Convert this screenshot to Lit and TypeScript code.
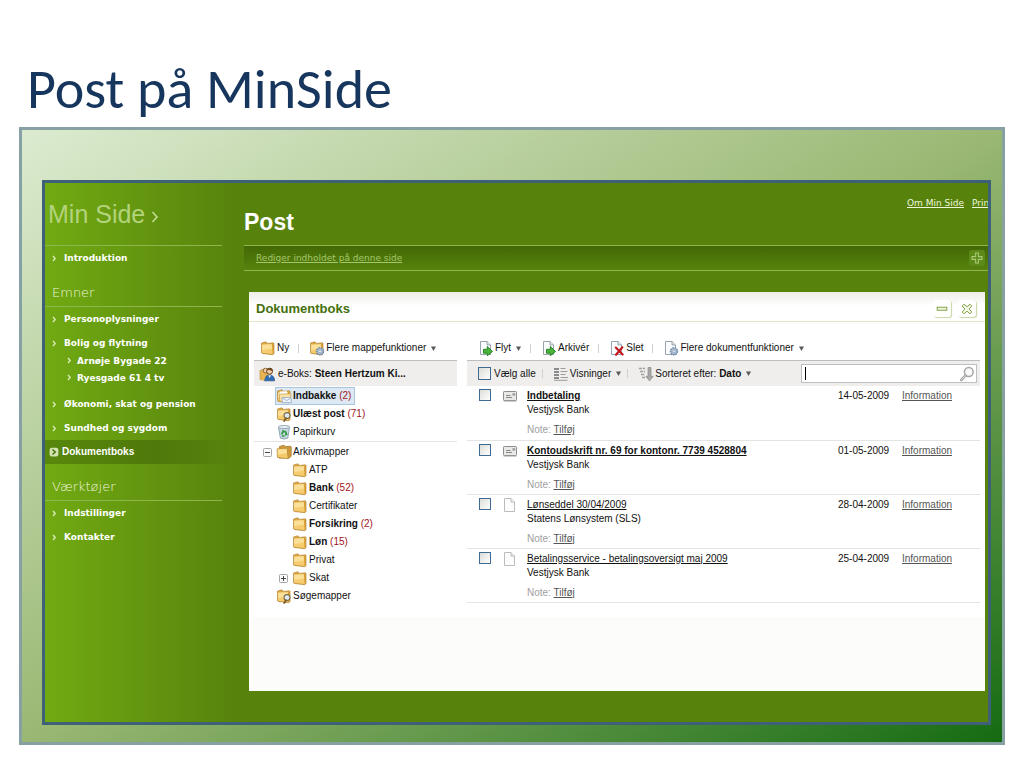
import { LitElement, html, svg, css, nothing } from "lit";
import { customElement, state } from "lit/decorators.js";

/* ---------- icons ---------- */

const wrap = (body: unknown, size = 16) =>
  html`<svg width=${size} height=${size} viewBox="0 0 16 16" aria-hidden="true">${body}</svg>`;

const folderShape = svg`
  <path d="M1.5 3 6 1.8 7.6 3.4l6-.6.4.6v10.2l-1.2 1.2L2 13.4l-.5-.6z" fill="#d9a441" stroke="#b58a3c" stroke-width=".7"/>
  <path d="M2 4.6 11.9 4.1 12.7 14.1 2 12.8z" fill="#f5cd70"/>
  <path d="M2.2 4.8 11.7 4.4 12 8.4 2.2 10z" fill="#fbe09a"/>
  <path d="M12.2 4.4 13.6 3.6v9.6l-.8.9z" fill="#d79c36"/>`;

const sheet = svg`
  <path d="M2.5 1.5h6.5l3.5 3.4v9.6h-10z" fill="#fafcfd" stroke="#8e9aa5" stroke-width=".9"/>
  <path d="M9 1.5v3.4h3.5" fill="#e3e9ee" stroke="#8e9aa5" stroke-width=".9"/>`;

const gear = svg`
  <circle cx="11" cy="11.3" r="3.5" fill="#a9bdd3" stroke="#6d84a0" stroke-width="1.5" stroke-dasharray="1.5 .9"/>
  <circle cx="11" cy="11.3" r="1.2" fill="#fff" stroke="#7e93ad" stroke-width=".6"/>`;

const greenArrow = svg`
  <path d="M5.5 9.3h3.8V6.4l5.2 5.1-5.2 4.2V13.2H5.5z" fill="#48b53a" stroke="#1f7c1a" stroke-width=".9" stroke-linejoin="round"/>`;

const icons: Record<string, unknown> = {
  folder: wrap(folderShape),
  folderGear: wrap(svg`${folderShape}${gear}`),
  archive: wrap(svg`
    <path d="M3.5 2.5 8 1.2l1.4 1.4 5.2-.3.6.6v9.4l-2 1.8H3z" fill="#cf9a3b" stroke="#a87a2e" stroke-width=".8"/>
    <path d="M1 4.8 11 4.2 12.2 14.8 1.4 13.4z" fill="#f4c968" stroke="#b58a3c" stroke-width=".7"/>
    <path d="M1.8 5.4 10.5 4.9 11 9.2 2 10.4z" fill="#fbe09a"/>`),
  inbox: wrap(svg`${folderShape}
    <path d="M3.6 3.6 11 3.2v4H3.8z" fill="#fff"/>
    <path d="M3.4 6.2 15 5.8 14 13.6 3.6 13.2z" fill="#fae3a4" stroke="#c69a4c" stroke-width=".7"/>
    <path d="M6 9.5h7.5l1.8.6v4.6H6.4z" fill="#eef4fb" stroke="#93a8c4" stroke-width=".8"/>
    <path d="M6.8 10.2 10.6 12.6l4-2.2" fill="none" stroke="#93a8c4" stroke-width=".8"/>`),
  searchFolder: wrap(svg`${folderShape}
    <circle cx="11" cy="9.6" r="3" fill="#dceaf5" stroke="#7c6a43" stroke-width="1.1"/>
    <path d="M10 12.2 8.2 15" stroke="#7c5a28" stroke-width="1.8" stroke-linecap="round"/>`),
  bin: wrap(svg`
    <path d="M2.5 3.2 13.5 3.2 11.8 14.2Q8 15.8 4.4 14.2z" fill="#c5d6e1" stroke="#7f97a6" stroke-width=".8"/>
    <ellipse cx="8" cy="3" rx="5.6" ry="1.5" fill="#eef4f7" stroke="#7f97a6" stroke-width=".8"/>
    <path d="M5.6 10.4 7.2 7l1.4 1M9.2 7.2l1.4 3-1.6.6M8.6 12H6" fill="none" stroke="#2f9a40" stroke-width="1.6"/>`),
  users: wrap(svg`
    <path d="M1 13.5V4.5L5 3l1.5 1.5 5-.5v8z" fill="#e9b552" stroke="#b58a3c" stroke-width=".6"/>
    <circle cx="6.6" cy="4.6" r="2.4" fill="#f0c9a0" stroke="#7a5426" stroke-width=".8"/>
    <circle cx="10.6" cy="5.2" r="3" fill="#f3cda6" stroke="#5b3a16" stroke-width=".9"/>
    <path d="M7.8 4.6Q8 1.8 11 2.1q2.8.4 2.6 3Q11 4.6 10 3.8 9 4.6 7.8 4.6z" fill="#6b441c"/>
    <path d="M5.4 14.8q.2-5.6 5.2-5.8 4.8.2 5 5.8z" fill="#2f6db5" stroke="#1d4a85" stroke-width=".7"/>
    <path d="M9.4 9.2 10.6 12l1.3-2.8z" fill="#fff"/>
    <path d="M2.2 14.5q.2-4 3.6-5.2l.8 1.2-1.6 4z" fill="#e9b552"/>`),
  move: wrap(svg`${sheet}${greenArrow}`),
  remove: wrap(svg`${sheet}<path d="M6.8 7.5l6.8 7.1M13.4 7.3 7 14.8" stroke="#c4161c" stroke-width="2.1" stroke-linecap="round"/>`),
  docGear: wrap(svg`${sheet}${gear}`),
  sheet: wrap(svg`
    <path d="M2.5 1.5h6.5l3.5 3.6v9.4h-10z" fill="#fdfdfd" stroke="#b4b4b4" stroke-width=".9"/>
    <path d="M9 1.5v3.6h3.5" fill="#eee" stroke="#b4b4b4" stroke-width=".9"/>`),
  mail: wrap(svg`
    <rect x="1.5" y="3.5" width="13" height="9" rx=".8" fill="#e9e9e7" stroke="#8d8d8d"/>
    <path d="M4 7.5h4.5M4 9.5h6" stroke="#8a8a8a"/>
    <rect x="10.5" y="5.2" width="2.6" height="2.4" fill="#9b9b9b"/>
    <path d="M1.6 13.2h13" stroke="#a9a9a9" stroke-width=".8"/>`),
  views: wrap(svg`
    <path d="M1 3h5M1 6h5M1 9h5M1 12h5" stroke="#8b8b8b" stroke-width="2"/>
    <path d="M7.5 2.5h5M7.5 5.5h7M7.5 8.5h5M7.5 11.5h7.5M1 14.3h13.5" stroke="#9c9c9c"/>`),
  sort: wrap(svg`
    <path d="M1 2.5h6M2 5.5h5M3 8.5h4M4 11.5h3" stroke="#a0a0a0" stroke-width="1.6" stroke-dasharray="3.2 .8"/>
    <path d="M10 1.5h3v8.8h2.2L11.5 15 7.8 10.3H10z" fill="#a8a8a8" stroke="#8b8b8b" stroke-width=".7"/>`),
  lens: wrap(svg`
    <circle cx="9.8" cy="6" r="4.4" fill="#fafafa" stroke="#a6a6a6" stroke-width="1.5"/>
    <path d="M6.6 9.4 2.2 14" stroke="#a6a6a6" stroke-width="2.6" stroke-linecap="round"/>
    <path d="M6.4 9.6 2.4 13.8" stroke="#e8e8e8" stroke-width=".8" stroke-linecap="round"/>`),
  badge: wrap(svg`
    <rect x="1" y="1" width="14" height="14" rx="3.5" fill="#d3e3b4"/>
    <path d="M5.5 4l4.5 4-4.5 4" fill="none" stroke="#4d770a" stroke-width="2.6"/>`, 10),
  plus: wrap(svg`
    <rect x="0" y="0" width="16" height="16" rx="3" fill="#5c8a18"/>
    <path d="M6.6 3h2.8v3.6H13v2.8H9.4V13H6.6V9.4H3V6.6h3.6z" fill="none" stroke="#a9c874" stroke-width="1.1"/>`),
  minus: wrap(svg`<rect x="2.5" y="6" width="11" height="3.4" fill="#f2f7e2" stroke="#7f9f45" stroke-width="1.1"/>`),
  close: wrap(svg`<path d="M2.5 4.5 4.5 2.5l3.5 3 3.5-3 2 2-3 3.5 3 3.5-2 2-3.5-3-3.5 3-2-2 3-3.5z" fill="#f5f9e8" stroke="#7f9f45" stroke-width="1.1"/>`),
  chevron: html`<svg width="5" height="7" viewBox="0 0 5 7" aria-hidden="true"><path d="M1 1l2.2 2.5L1 6" fill="none" stroke="#d7eab3" stroke-width="1.4"/></svg>`,
  chevronBig: html`<svg width="8" height="12" viewBox="0 0 8 12" aria-hidden="true"><path d="M1.5 1l4.5 5-4.5 5" fill="none" stroke="#c2dc94" stroke-width="1.6"/></svg>`,
  down: html`<svg width="5" height="5" viewBox="0 0 5 5" aria-hidden="true"><path d="M0 .5h5L2.5 5z" fill="#5a5a5a"/></svg>`,
};

const expander = (open: boolean) => html`<svg width="9" height="9" viewBox="0 0 9 9" aria-hidden="true">
  <rect x=".5" y=".5" width="8" height="8" rx="1" fill="#fbfbfb" stroke="#a5a5a5"/>
  <path d=${open ? "M2 4.5h5" : "M2 4.5h5M4.5 2v5"} stroke="#444"/></svg>`;

/* ---------- data ---------- */

interface NavItem { label: string; children?: string[]; current?: boolean }
interface Folder { label: string; icon: string; count?: number; level: number; selected?: boolean; expander?: "open" | "closed"; ruled?: boolean }
interface Doc { title: string; sender: string; date: string; unread: boolean }

const emner: NavItem[] = [
  { label: "Personoplysninger" },
  { label: "Bolig og flytning", children: ["Arnøje Bygade 22", "Ryesgade 61 4 tv"] },
  { label: "Økonomi, skat og pension" },
  { label: "Sundhed og sygdom" },
  { label: "Dokumentboks", current: true },
];
const tools: NavItem[] = [{ label: "Indstillinger" }, { label: "Kontakter" }];

const folders: Folder[] = [
  { label: "Indbakke", icon: "inbox", count: 2, level: 1, selected: true },
  { label: "Ulæst post", icon: "searchFolder", count: 71, level: 1 },
  { label: "Papirkurv", icon: "bin", level: 1, ruled: true },
  { label: "Arkivmapper", icon: "archive", level: 1, expander: "open" },
  { label: "ATP", icon: "folder", level: 2 },
  { label: "Bank", icon: "folder", count: 52, level: 2 },
  { label: "Certifikater", icon: "folder", level: 2 },
  { label: "Forsikring", icon: "folder", count: 2, level: 2 },
  { label: "Løn", icon: "folder", count: 15, level: 2 },
  { label: "Privat", icon: "folder", level: 2 },
  { label: "Skat", icon: "folder", level: 2, expander: "closed" },
  { label: "Søgemapper", icon: "searchFolder", level: 1 },
];

const docs: Doc[] = [
  { title: "Indbetaling", sender: "Vestjysk Bank", date: "14-05-2009", unread: true },
  { title: "Kontoudskrift nr. 69 for kontonr. 7739 4528804", sender: "Vestjysk Bank", date: "01-05-2009", unread: true },
  { title: "Lønseddel 30/04/2009", sender: "Statens Lønsystem (SLS)", date: "28-04-2009", unread: false },
  { title: "Betalingsservice - betalingsoversigt maj 2009", sender: "Vestjysk Bank", date: "25-04-2009", unread: false },
];

/* ---------- shared styles ---------- */

const base = css`
  * { box-sizing: border-box; }
  ul, h1, h2, h3, p { margin: 0; padding: 0; }
  ul { list-style: none; }
  svg { display: block; flex: none; }
  a { color: inherit; }
  button { font: inherit; color: inherit; background: none; border: 0; padding: 0; margin: 0; white-space: nowrap; cursor: pointer; }
`;

/* ---------- side navigation ---------- */

@customElement("side-nav")
class SideNav extends LitElement {
  static styles = [base, css`
    :host { display: block; padding-right: 22px; color: #fff; font: bold 9px/12px "DejaVu Sans", Verdana, sans-serif; }
    .brand { display: flex; align-items: center; gap: 6px; height: 63px; padding-left: 3px; border-bottom: 1px solid #8db64d; color: #b3d37c; font: 25px/28px "Liberation Sans", Arial, sans-serif; }
    .brand svg { margin-top: 6px; }
    .head { height: 37px; padding: 14px 0 0 7px; border-bottom: 1px solid #8db64d; color: #eef6dc; font: 200 13px/18px "DejaVu Sans", Verdana, sans-serif; }
    .item { display: flex; align-items: center; height: 24px; padding-left: 7px; gap: 7px; color: #fff; text-decoration: none; }
    .current { padding-left: 4px; gap: 3px; margin-right: -8px; font: bold 10px/12px "Liberation Sans", Arial, sans-serif; background: linear-gradient(90deg, #57880c, #4f790a 60%, #57830d); }
    .subs { margin: -3px 0 6px; }
    .sub { height: 17px; padding-left: 22px; gap: 5px; }
  `];

  private list(items: NavItem[]) {
    return html`<ul>${items.map((i) => html`<li>
      <a class="item ${i.current ? "current" : ""}" href="#">${i.current ? icons.badge : icons.chevron}<span>${i.label}</span></a>
      ${i.children ? html`<ul class="subs">${i.children.map((c) => html`<li><a class="item sub" href="#">${icons.chevron}<span>${c}</span></a></li>`)}</ul>` : nothing}
    </li>`)}</ul>`;
  }

  render() {
    return html`<nav>
      <div class="brand"><span>Min Side</span>${icons.chevronBig}</div>
      ${this.list([{ label: "Introduktion" }])}
      <h3 class="head">Emner</h3>
      ${this.list(emner)}
      <h3 class="head">Værktøjer</h3>
      ${this.list(tools)}
    </nav>`;
  }
}

/* ---------- document box ---------- */

@customElement("document-box")
class DocumentBox extends LitElement {
  @state() private query = "";

  static styles = [base, css`
    :host { display: block; background: #fcfcfa; color: #111; font: 10px/14px "Liberation Sans", Arial, sans-serif; }
    .bar { display: flex; align-items: center; height: 30px; padding: 4px 9px 0 7px; background: linear-gradient(#eceee6, #fff 14px); border-bottom: 1px solid #e0e8c8; }
    .title { flex: 1; color: #44700b; font: bold 13px/16px "Liberation Sans", Arial, sans-serif; }
    .bar button { width: 18px; height: 17px; display: grid; place-items: center; margin-left: 7px; border-radius: 3px; background: #fff; box-shadow: 1px 1px 1px #c5d6a0; }
    .bar button svg { width: 14px; height: 14px; }
    .body { display: grid; grid-template-columns: 203px minmax(0, 1fr); column-gap: 10px; padding: 14px 5px 12px; background: #fff; }
    .tools { display: flex; align-items: center; height: 25px; padding-left: 6px; border-bottom: 1px solid #bdbdbd; }
    .docs .tools, .docs .strip { padding-left: 11px; }
    .tool { display: flex; align-items: center; gap: 1px; }
    .tool svg:last-child:not(:first-child) { margin-left: 4px; }
    .sep { width: 1px; height: 9px; margin: 0 10px 0 9px; background: #cfcfcf; flex: none; }
    .strip { display: flex; align-items: center; height: 25px; padding: 0 3px 0 5px; background: #efeeec; }
    .strip .sep { margin: 0 10px 0 6px; }
    .owner { display: flex; align-items: center; gap: 3px; }
    .all { display: flex; align-items: center; gap: 3px; white-space: nowrap; }
    input[type="checkbox"] { appearance: none; display: block; flex: none; width: 12px; height: 12px; margin: 0; border: 1px solid #3f6a94; background: linear-gradient(135deg, #dcdcd7, #fff); }
    .all input[type="checkbox"] { width: 13px; height: 13px; }
    .search { position: relative; display: flex; align-items: center; flex: 0 1 176px; height: 19px; margin-left: auto; padding-right: 1px; border: 1px solid #bfbfbf; background: #fff; }
    .search input { flex: 1; min-width: 0; height: 16px; border: 0; padding: 0 4px; outline: 0; background: none; font: inherit; }
    .caret { position: absolute; left: 3px; top: 2px; width: 1px; height: 13px; background: #000; }
    .tree { padding-top: 1px; }
    .folder { display: flex; align-items: center; height: 18px; padding-left: 8px; }
    .ruled { height: 19px; margin-bottom: 1px; border-bottom: 1px solid #e4e4e4; }
    .knob { width: 13px; flex: none; padding-left: 1px; }
    .level2 { padding-left: 24px; }
    .pick { display: flex; align-items: center; gap: 1px; height: 18px; padding: 0 3px 0 0; border: 1px solid transparent; }
    .selected { background: #dce9f3; border-color: #a9c6de; }
    .count { color: #a3141c; }
    .has { font-weight: bold; }
    table { width: 100%; border-collapse: collapse; table-layout: fixed; }
    td { height: 54px; padding: 3px 0 0; vertical-align: top; border-bottom: 1px solid #e4e4e4; }
    .c-check { width: 35px; padding-left: 12px; }
    .c-icon { width: 25px; padding-top: 2px; }
    .c-date { width: 64px; }
    .c-info { width: 78px; color: #555; }
    .doc { color: #111; }
    .unread { font-weight: bold; }
    .note { margin-top: 6px; color: #a0a0a0; }
    .note a { color: #555; }
    .foot { height: 74px; }
  `];

  private tool(icon: string, label: unknown, menu = false) {
    return html`<button class="tool">${icons[icon]}<span>${label}</span>${menu ? icons.down : nothing}</button>`;
  }

  render() {
    const sep = html`<span class="sep"></span>`;
    return html`
      <div class="bar">
        <h2 class="title">Dokumentboks</h2>
        <button aria-label="Minimer">${icons.minus}</button>
        <button aria-label="Luk">${icons.close}</button>
      </div>
      <div class="body">
        <section class="folders">
          <div class="tools">${this.tool("folder", "Ny")}${sep}${this.tool("folderGear", "Flere mappefunktioner", true)}</div>
          <div class="strip"><p class="owner">${icons.users}<span>e-Boks: <b>Steen Hertzum Ki...</b></span></p></div>
          <ul class="tree">${folders.map((f) => html`
            <li class="folder level${f.level} ${f.ruled ? "ruled" : ""}">
              <span class="knob">${f.expander ? expander(f.expander === "open") : nothing}</span>
              <button class="pick ${f.selected ? "selected" : ""}">${icons[f.icon]}<span><span class=${f.count ? "has" : ""}>${f.label}</span>${f.count ? html` <span class="count">(${f.count})</span>` : nothing}</span></button>
            </li>`)}</ul>
        </section>
        <section class="docs">
          <div class="tools">
            ${this.tool("move", "Flyt", true)}${sep}${this.tool("move", "Arkivér")}${sep}${this.tool("remove", "Slet")}${sep}${this.tool("docGear", "Flere dokumentfunktioner", true)}
          </div>
          <div class="strip">
            <label class="all"><input type="checkbox" />Vælg alle</label>${sep}
            ${this.tool("views", "Visninger", true)}${sep}
            ${this.tool("sort", html`Sorteret efter: <b>Dato</b>`, true)}
            <div class="search">
              <input type="text" aria-label="Søg" .value=${this.query} @input=${(e: Event) => (this.query = (e.target as HTMLInputElement).value)} />
              ${this.query ? nothing : html`<span class="caret"></span>`}
              ${icons.lens}
            </div>
          </div>
          <table><tbody>${docs.map((d) => html`<tr>
            <td class="c-check"><input type="checkbox" aria-label=${d.title} /></td>
            <td class="c-icon">${icons[d.unread ? "mail" : "sheet"]}</td>
            <td>
              <a class="doc ${d.unread ? "unread" : ""}" href="#">${d.title}</a>
              <p>${d.sender}</p>
              <p class="note">Note: <a href="#">Tilføj</a></p>
            </td>
            <td class="c-date">${d.date}</td>
            <td class="c-info"><a href="#">Information</a></td>
          </tr>`)}</tbody></table>
        </section>
      </div>
      <div class="foot"></div>`;
  }
}

/* ---------- page ---------- */

@customElement("app-root")
class AppRoot extends LitElement {
  static styles = [base, css`
    :host { display: flex; flex-direction: column; min-height: 100vh; box-sizing: border-box; padding: 54px 19px 23px; background: #fff; }
    .heading { height: 73px; padding-left: 8px; color: #17365d; font: 56px/70px Carlito, Calibri, Lato, sans-serif; }
    .frame { flex: 1; display: flex; padding: 50px 11px 17px 20px; border: 3px solid #86a0a4; background: linear-gradient(to bottom right, #dcebd0 0%, #9ab873 50%, #156b12 100%); }
    .screen { flex: 1; min-width: 0; display: grid; grid-template-columns: 199px minmax(0, 1fr); border: 3px solid #3f6177; background: linear-gradient(90deg, #71aa12, #57830d 190px); overflow: hidden; }
    .main { min-width: 0; color: #fff; font: 9px/12px "DejaVu Sans", Verdana, sans-serif; }
    .links { display: flex; justify-content: flex-end; gap: 8px; height: 26px; padding-top: 14px; color: #eef6dc; white-space: nowrap; }
    .cut { width: 16px; overflow: hidden; }
    .post { height: 36px; font: bold 23px/26px "Liberation Sans", Arial, sans-serif; }
    .edit { display: flex; align-items: center; justify-content: space-between; height: 26px; padding: 0 3px 0 12px; border-top: 1px solid #8db64d; border-bottom: 1px solid #8db64d; background: linear-gradient(#426805, #57830d); color: #a5c66c; }
    .box { margin: 21px 3px 31px 5px; }
  `];

  render() {
    return html`
      <h1 class="heading">Post på MinSide</h1>
      <div class="frame">
        <div class="screen">
          <side-nav></side-nav>
          <main class="main">
            <div class="links"><a href="#">Om Min Side</a><a class="cut" href="#">Print</a></div>
            <h2 class="post">Post</h2>
            <div class="edit"><a href="#">Rediger indholdet på denne side</a><button aria-label="Tilføj">${icons.plus}</button></div>
            <document-box class="box"></document-box>
          </main>
        </div>
      </div>`;
  }
}
